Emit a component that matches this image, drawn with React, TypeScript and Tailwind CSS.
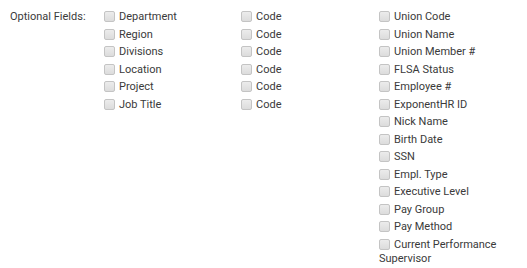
import React from "react";

const col1 = ["Department", "Region", "Divisions", "Location", "Project", "Job Title"];
const col2 = ["Code", "Code", "Code", "Code", "Code", "Code"];
const col3 = [
  "Union Code",
  "Union Name",
  "Union Member #",
  "FLSA Status",
  "Employee #",
  "ExponentHR ID",
  "Nick Name",
  "Birth Date",
  "SSN",
  "Empl. Type",
  "Executive Level",
  "Pay Group",
  "Pay Method",
  "Current Performance Supervisor",
];

function Box() {
  return (
    <span className="inline-block align-[-2px] w-[11px] h-[11px] rounded-[2px] border border-[#c4c4c4] bg-gradient-to-b from-[#ececec] to-[#dcdcdc] mr-[4px]" />
  );
}

function Item({ label }: { label: string }) {
  return (
    <div className="leading-[14px] mb-[3.5px]">
      <Box />
      {label}
    </div>
  );
}

export default function App() {
  return (
    <div
      className="w-[527px] h-[268px] bg-white text-[11px] text-[#3a3a3a] flex pt-[10px]"
      style={{ fontFamily: "Roboto, 'Liberation Sans', sans-serif" }}
    >
      <div className="w-[104px] pl-[10px] leading-[14px]">Optional Fields:</div>
      <div className="w-[137px]">
        {col1.map((l, i) => (
          <Item key={i} label={l} />
        ))}
      </div>
      <div className="w-[138px]">
        {col2.map((l, i) => (
          <Item key={i} label={l} />
        ))}
      </div>
      <div className="w-[122px]">
        {col3.map((l, i) => (
          <Item key={i} label={l} />
        ))}
      </div>
    </div>
  );
}
